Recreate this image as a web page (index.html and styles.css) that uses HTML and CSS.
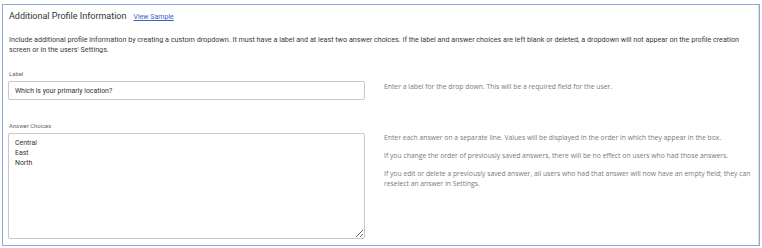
FILE: index.html
```html
<!DOCTYPE html>
<html>
<head>
    <title>Additional Profile Information</title>
    <link rel="stylesheet" href="styles.css">
</head>
<body>
    <div class="card">
        <div class="card-inner">
            <div class="card-header">
                <h2>Additional Profile Information</h2>
                <a href="#" class="sample-link">View Sample</a>
            </div>
            <p class="intro">Include additional profile information by creating a custom dropdown. It must have a label and at least two answer choices. If the label and answer choices are left blank or deleted, a dropdown will not appear on the profile creation screen or in the users' Settings.</p>

            <div class="field-row label-row">
                <div class="field">
                    <label for="dropdown_label">Label</label>
                    <input type="text" id="dropdown_label" value="Which is your primarly location?">
                </div>
                <div class="help">
                    <p>Enter a label for the drop down. This will be a required field for the user.</p>
                </div>
            </div>

            <div class="field-row choices-row">
                <div class="field">
                    <label for="answer_choices">Answer Choices</label>
                    <textarea id="answer_choices">Central
East
North</textarea>
                </div>
                <div class="help">
                    <p>Enter each answer on a separate line. Values will be displayed in the order in which they appear in the box.</p>
                    <p>If you change the order of previously saved answers, there will be no effect on users who had those answers.</p>
                    <p>If you edit or delete a previously saved answer, all users who had that answer will now have an empty field; they can reselect an answer in Settings.</p>
                </div>
            </div>
        </div>
    </div>
</body>
</html>
```

FILE: styles.css
```css
body {
    margin: 0;
    background-color: white;
    font-family: Roboto, "Liberation Sans", Arial, sans-serif;
    color: #333;
}
.card {
    margin: 4px 0 0 2px;
    width: 758px;
    height: 242px;
    box-sizing: border-box;
    border: 1.5px solid #8eaadb;
}
.card-inner {
    height: 100%;
    box-sizing: border-box;
    padding: 4px 0 0 5px;
    border-right: 1px solid #dcdcdc;
}
.card-header {
    display: flex;
    align-items: baseline;
    gap: 7px;
    padding-left: 1px;
}
h2 {
    margin: 0;
    font-size: 9px;
    font-weight: normal;
    line-height: 15px;
    color: #333;
}
.sample-link {
    font-size: 7px;
    color: #3a62c8;
    text-decoration: underline;
}
.intro {
    margin: 11px 0 0 1px;
    font-size: 7.2px;
    line-height: 10px;
    color: #3a3a3a;
}
.field-row {
    display: grid;
    grid-template-columns: 357px 1fr;
    gap: 19px;
}
.label-row {
    margin-top: 15px;
}
.label-row .help {
    padding-top: 11.5px;
}
.choices-row {
    margin-top: 22px;
}
label {
    display: block;
    font-size: 5.9px;
    line-height: 9px;
    color: #666;
    margin-bottom: 2px;
    padding-left: 1px;
}
input, textarea {
    display: block;
    width: 100%;
    box-sizing: border-box;
    border: 1px solid #c8c8c8;
    border-radius: 2px;
    font-family: Roboto, "Liberation Sans", Arial, sans-serif;
    font-size: 6.9px;
    color: #333;
    margin: 0;
}
input {
    height: 19px;
    padding: 0 6px;
}
textarea {
    height: 106px;
    padding: 4px 6px;
    line-height: 10px;
    resize: vertical;
}
.help {
    padding-top: 10.5px;
    font-family: "Open Sans", Roboto, sans-serif;
    font-size: 6.8px;
    line-height: 10px;
    color: #7a7a7a;
}
.help p {
    margin: 0 0 8px 0;
}
```
